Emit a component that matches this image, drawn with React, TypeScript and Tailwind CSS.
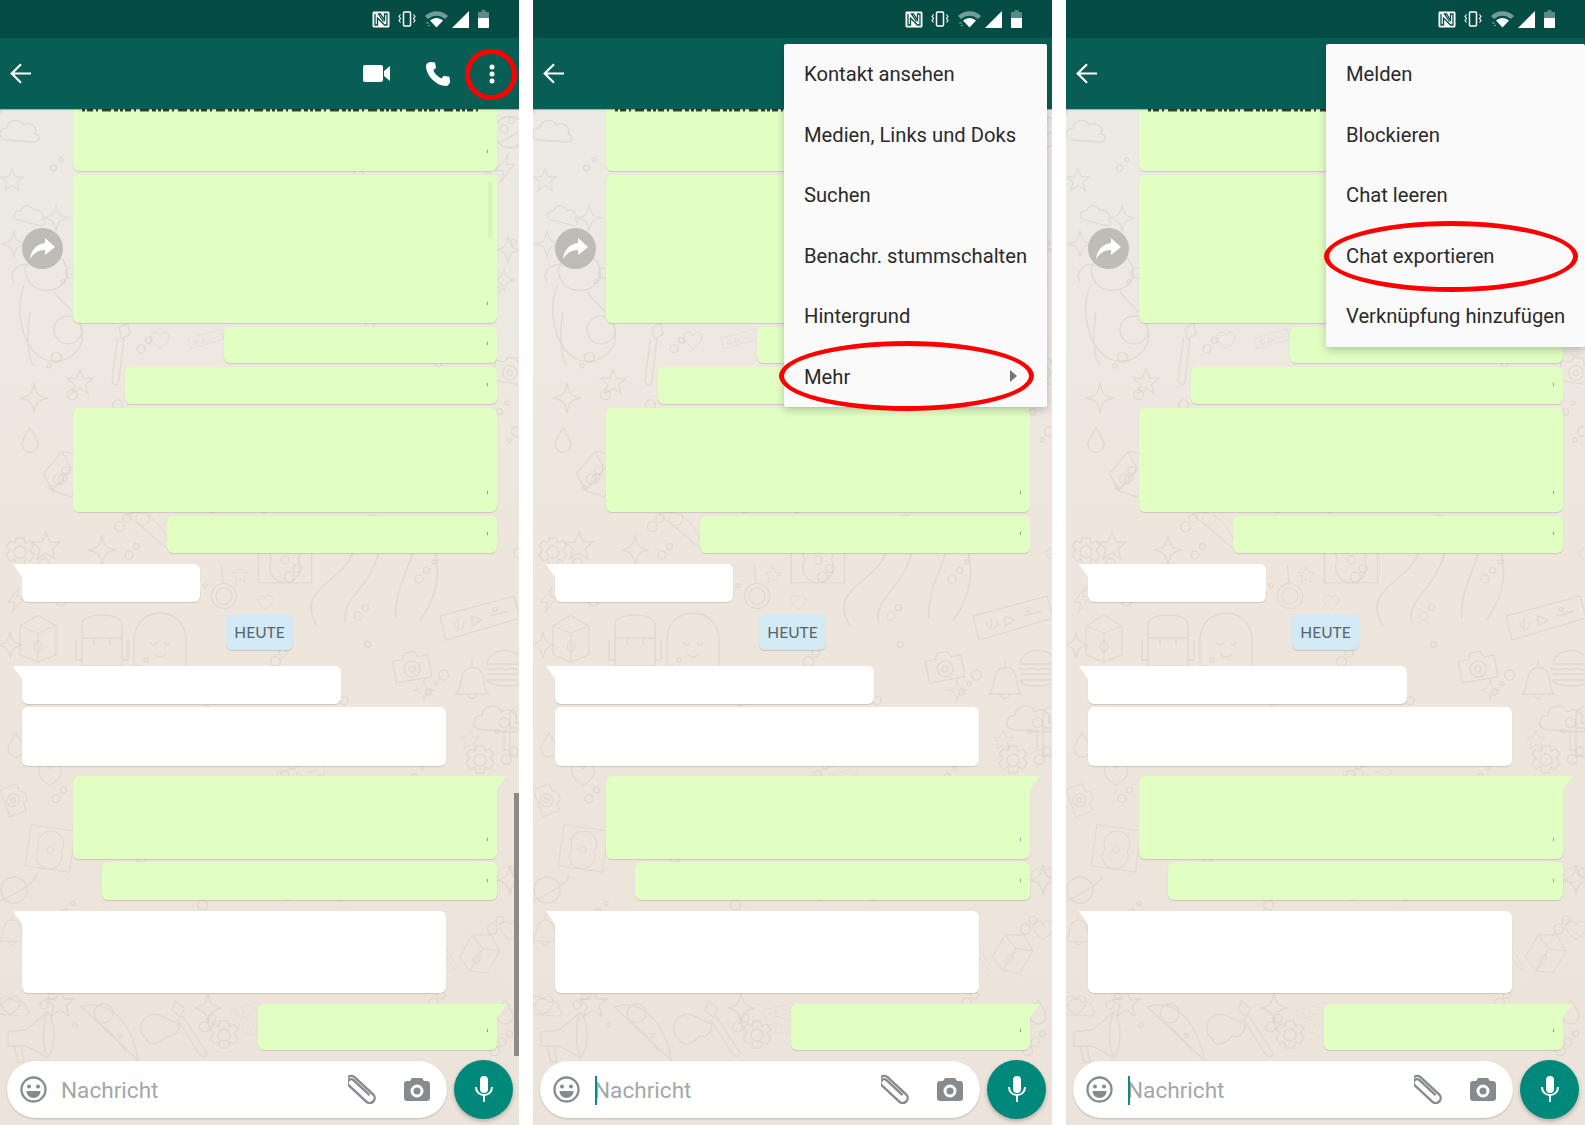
import React from 'react';

const FONT = "font-['Roboto',sans-serif]";

type Bubble = { cls: string; tail?: boolean; tick?: boolean };

const Doodle: React.FC<{ d: string; x: number; y: number; s?: number; r?: number }> = ({ d, x, y, s = 1, r = 0 }) => (
    <path d={d} transform={`translate(${x} ${y}) rotate(${r}) scale(${s})`} />
);

// doodle outlines, roughly 40x40 round the origin
const STAR = 'M0-14 4-4 14-4 6 3 9 13 0 7-9 13-6 3-14-4-4-4Z';
const SPARK = 'M0-15C2-4 4-2 14 0 4 2 2 4 0 15-2 4-4 2-14 0-4-2-2-4 0-15Z';
const CLOUD = 'M-16 8C-24 8-24-4-15-4-14-13-2-14 1-7 9-11 16-5 13 2 19 3 18 10 12 10L-16 8Z';
const HEART = 'M0 12C-18 0-14-12-6-11-2-11 0-7 0-6 0-7 3-12 7-11 15-10 17 1 0 12Z';
const DROP = 'M0-12C5-4 8 0 8 4 8 9 4 12 0 12-4 12-8 9-8 4-8 0-5-4 0-12Z';
const BOLT = 'M4-16-10 3-1 3-5 16 10-4 1-4Z';
const PIZZA = 'M-34-22C-10-32 18-16 30 30L-34-22ZM-20-10C-6-2 8 10 16 22M-14-26A9 9 0 1 1-6-8 9 9 0 1 1-14-26Z';
const MEGAPHONE = 'M-26-6-8-8 14-26C22-14 22 8 14 20L-8 8-26 8ZM-20 8-16 24-10 24-13 8M14-26C8-14 8 8 14 20';
const BRUSH = 'M-14-30-4-22-8-12-18-20ZM-6-14 20 26C24 32 16 34 12 28L-12-10';
const GEAR = 'M-4-14H4L5-9 10-11 14-6 10-2 14 3 10 9 5 7 4 13H-4L-5 7-10 9-14 3-10-2-14-6-10-11-5-9ZM6 0A6 6 0 1 1-6 0 6 6 0 1 1 6 0Z';
const CAMERA = 'M-18-10H-8L-5-16H5L8-10H18V12H-18ZM8 1A8 8 0 1 1-8 1 8 8 0 1 1 8 1ZM3 1A3 3 0 1 1-3 1 3 3 0 1 1 3 1Z';
const BURGER = 'M-18-4C-16-22 16-22 18-4ZM-20 0C-12 5-6-3 0 2 6-3 12 5 20 0M-18 6H18M-18 12H18C16 20-16 20-18 12Z';
const BELL = 'M-16 14C-10 8-12-2-8-8-4-14 6-14 9-8 13-2 11 8 16 14ZM-4 14C-4 20 4 20 4 14M0-14V-20';
const PACK = 'M-20-16C-20-28 20-28 20-16V26H-20ZM-20-2H20M-8-2V6M8-2V6M-26 0V20H-20M26 0V20H20';
const BOX = 'M-20-10 0-22 20-10V22L0 30-20 22ZM-20-10 0-2 20-10M0-2V30M-4 14C-4 8 0 6 0 6 0 6 4 8 4 14 4 20-4 20-4 14Z';
const FACE = 'M-26 36V0C-26-36 26-36 26 0V36M-10 2C-8 6-4 6-3 2M4 2C6 6 9 6 10 2M-6 14C-2 18 2 18 6 14';
const RECORD = 'M-28-28H28V24H-28ZM14 0A16 16 0 1 1-14 0 16 16 0 1 1 14 0ZM4 0A4 4 0 1 1-4 0 4 4 0 1 1 4 0Z';
const SNAKE = 'M-30 50C-50 20-10 10 0-10 10-30 10-50 20-50 34-50 30-20 20 0 10 20-8 30-4 48';
const TENTACLE = 'M-22 44C-24 10 0-10-4-44M8-44C14-14 26 10 0 46';
const TICKET = 'M-38-4 36-24 42-2-32 20ZM-20 -2V8M-24 2C-24 12-14 12-14 2M-6-4 4 0-6 6ZM12-4 30-9';
const ASTRO = 'M-24-26C-30-42 2-56 14-38 24-20 8-8-6-10-14-10-22-16-24-26ZM-26-14C-36 10-28 50-4 60 16 66 36 50 32 30 28 12 14 6 4-8M-20-34C-30-40-42-28-36-18M-20 12C-24 34-22 60-16 66M4 30A14 14 0 1 1 32 30 14 14 0 1 1 4 30Z';
const MAGNIFIER = 'M14 0A14 14 0 1 1-14 0 14 14 0 1 1 14 0ZM9 0A9 9 0 1 1-9 0 9 9 0 1 1 9 0ZM-10-10-24-24';
const PLANET = 'M13 0A13 13 0 1 1-13 0 13 13 0 1 1 13 0ZM-20 10C-30 18-10 10 0 4 12-2 28-14 20-14';
const BLOB = 'M-12-14C-2-20 8-8 16-8 24-4 14 10 6 6 0 14-12 18-14 8-22 4-20-10-12-14Z';

const DOODLES: [string, number, number, number?, number?][] = [
    [CLOUD, 22, 132], [STAR, 12, 180, 0.8], [SPARK, 56, 218, 0.9], [CLOUD, 32, 216, 0.8, 10], [BOLT, 505, 168, 0.9], [PLANET, 510, 132, 1.2],
    [ASTRO, 50, 300, 1], [SPARK, 14, 244, 0.9], [SPARK, 508, 250, 0.9], [SPARK, 504, 280, 0.8], [HEART, 160, 340, 0.7], [TICKET, 205, 340, 0.45],
    [BRUSH, 120, 352, 0.9, 40], [STAR, 80, 382, 0.9], [DROP, 30, 440, 1], [SPARK, 34, 398, 1], [CAMERA, 510, 372, 0.9, 10], [BOX, 70, 470, 0.9, 40],
    [GEAR, 20, 552], [STAR, 46, 546, 1], [SPARK, 102, 550, 1], [PIZZA, 150, 530, 0.7], [RECORD, 285, 560, 0.95], [SNAKE, 350, 570, 1.1], [TENTACLE, 420, 570, 1.1],
    [BOLT, 16, 600, 0.8], [BOX, 38, 635, 0.9], [PACK, 102, 640, 1], [FACE, 160, 640, 1], [MAGNIFIER, 224, 596, 0.9, 40], [STAR, 240, 575, 0.6], [HEART, 265, 602, 0.6], [TICKET, 478, 620, 1],
    [SPARK, 10, 645, 0.9], [BELL, 472, 680, 1], [BURGER, 505, 668, 1], [CAMERA, 412, 668, 1, -10], [SPARK, 424, 690, 0.7], [STAR, 240, 642, 0.6],
    [DROP, 16, 745, 1], [PACK, 530, 730, 1], [HEART, 50, 775, 0.9], [TICKET, 300, 775, 0.6],
    [GEAR, 480, 760, 1], [STAR, 470, 740, 0.7], [CLOUD, 500, 720, 1.2], [RECORD, 50, 850, 0.8, 8], [CAMERA, 14, 800, 0.8, 70], [SPARK, 510, 880, 1], [HEART, 510, 930, 0.8],
    [PLANET, 14, 890, 1], [FACE, 510, 880, 0.5], [BOX, 482, 950, 0.8, 30], [BELL, 12, 930, 0.8], [BRUSH, 445, 950, 0.6],
    [HEART, 10, 1005, 0.8], [MEGAPHONE, 34, 1038, 1], [STAR, 60, 1003, 1], [PIZZA, 112, 1030, 0.95, 4], [BRUSH, 188, 1028, 0.9], [BLOB, 160, 1030, 1], [GEAR, 224, 1035, 1], [SPARK, 208, 1008, 1], [TICKET, 245, 1012, 0.4],
    [RECORD, 248, 1026, 0.3, 15], [DROP, 505, 1012, 1], [CLOUD, 15, 1008, 0.8],
];

// little filler circles, same spread on every phone
const DOTS = Array.from({ length: 170 }, (_, i) => ({
    x: (i * 137.5 + (i % 7) * 11) % 519,
    y: 112 + ((i * 211.3 + (i % 5) * 17) % 950),
    r: 2 + (i % 4),
}));

const Wallpaper = () => (
    <svg className="absolute left-0 top-0" width="519" height="1125" viewBox="0 0 519 1125" fill="none" stroke="#d6d0c7" strokeOpacity="0.62" strokeWidth="1.3">
        {DOTS.map((c, i) => (
            <circle key={i} cx={c.x} cy={c.y} r={c.r} />
        ))}
        {DOODLES.map(([d, x, y, s, r], i) => (
            <Doodle key={i} d={d} x={x} y={y} s={s} r={r} />
        ))}
    </svg>
);

const BUBBLES: Bubble[] = [
    { cls: 'self-end w-[424px] h-[62px] bg-[#e1fec3] rounded-b-md', tick: true },
    { cls: 'self-end w-[424px] h-[148px] mt-[4px] bg-[#e1fec3] rounded-md', tick: true },
    { cls: 'self-end w-[273px] h-[36px] mt-[4px] bg-[#e1fec3] rounded-md', tick: true },
    { cls: 'self-end w-[372px] h-[37px] mt-[4px] bg-[#e1fec3] rounded-md', tick: true },
    { cls: 'self-end w-[424px] h-[104px] mt-[4px] bg-[#e1fec3] rounded-md', tick: true },
    { cls: 'self-end w-[330px] h-[37px] mt-[4px] bg-[#e1fec3] rounded-md', tick: true },
    { cls: 'self-start w-[178px] h-[38px] mt-[11px] bg-white rounded-md rounded-tl-none', tail: true },
];

const BUBBLES_AFTER: Bubble[] = [
    { cls: 'self-start w-[319px] h-[38px] mt-[16px] bg-white rounded-md rounded-tl-none', tail: true },
    { cls: 'self-start w-[424px] h-[59px] mt-[3px] bg-white rounded-md' },
    { cls: 'self-end w-[424px] h-[83px] mt-[10px] bg-[#e1fec3] rounded-md rounded-tr-none', tail: true, tick: true },
    { cls: 'self-end w-[395px] h-[38px] mt-[3px] bg-[#e1fec3] rounded-md', tick: true },
    { cls: 'self-start w-[424px] h-[82px] mt-[11px] bg-white rounded-md rounded-tl-none', tail: true },
    { cls: 'self-end w-[239px] h-[46px] mt-[11px] bg-[#e1fec3] rounded-md rounded-tr-none', tail: true, tick: true },
];

const ChatBubble: React.FC<{ b: Bubble }> = ({ b }) => {
    const mine = b.cls.includes('self-end');
    return (
        <div className={`relative shrink-0 shadow-[0_1px_1px_rgba(0,0,0,0.14)] ${b.cls}`}>
            {b.tail && mine && (
                <svg className="absolute -right-[10px] top-0" width="10" height="13" viewBox="0 0 10 13">
                    <path d="M0 0H10L0 13Z" fill="#e1fec3" />
                </svg>
            )}
            {b.tail && !mine && (
                <svg className="absolute -left-[9px] top-0" width="9" height="13" viewBox="0 0 9 13">
                    <path d="M0 0H9V13Z" fill="#fff" />
                </svg>
            )}
            {b.tick && <span className="absolute right-[9px] bottom-[18px] w-[1px] h-[3px] bg-[#8d9a85]" />}
        </div>
    );
};

const StatusIcons = () => (
    <div className="flex items-center justify-end h-[38px] pr-[30px] shrink-0 bg-[#054c44]">
        <svg width="18" height="17" viewBox="0 0 18 17" className="mr-[8px]">
            <path d="M2 .5h14c.8 0 1.500.7 1.500 1.500v13c0 .8-.7 1.500-1.500 1.500H2C1.200 16.500.5 15.800.5 15V2C.5 1.200 1.200.5 2 .5Z" fill="#fff" />
            <path d="M3 3v11h2.500V7l7 7H15V3h-2.500v6l-4-6H6.500l5 7.500" fill="none" stroke="#054c44" strokeWidth="1.300" />
        </svg>
        <svg width="18" height="16" viewBox="0 0 18 16" className="mr-[9px]" fill="none" stroke="#fff">
            <rect x="5.500" y="1" width="7" height="14" rx="1" strokeWidth="1.500" />
            <path d="M2.500 3.500 1 5.500l1.500 2-1.500 2 1.500 2M15.500 3.500l1.500 2-1.500 2 1.500 2-1.500 2" strokeWidth="1.100" />
        </svg>
        <svg width="23" height="17" viewBox="0 0 23 17" className="mr-[4px]">
            <path d="M0 5C6-1.500 17-1.500 23 5L20 8C15 3.500 8 3.500 3 8Z" fill="#fff" fillOpacity=".45" />
            <path d="M5 9.500C9 6 14 6 18 9.500L11.500 16.500Z" fill="#fff" />
            <path d="M1 12h3M3 14.500h2" stroke="#fff" strokeOpacity=".5" />
        </svg>
        <svg width="17" height="17" viewBox="0 0 17 17" className="mr-[9px]">
            <path d="M17 0V17H0Z" fill="#fff" />
        </svg>
        <svg width="11" height="18" viewBox="0 0 11 18">
            <path d="M3.500 0h4v2H10c.6 0 1 .4 1 1v14c0 .6-.4 1-1 1H1c-.6 0-1-.4-1-1V3c0-.6.4-1 1-1h2.500Z" fill="#fff" fillOpacity=".35" />
            <path d="M0 8h11v9c0 .6-.4 1-1 1H1c-.6 0-1-.4-1-1Z" fill="#fff" />
        </svg>
    </div>
);

const Header = () => (
    <div className="relative z-10 flex items-center h-[71px] pl-[10px] pr-[24px] shrink-0 bg-[#085e54] shadow-[0_1px_1px_rgba(0,0,0,0.25)]">
        <svg width="21" height="21" viewBox="0 0 21 21" fill="none" stroke="#fff" strokeWidth="2.200">
            <path d="M21 10.500H2M11 1.200 1.700 10.500 11 19.800" />
        </svg>
        <svg width="27" height="17" viewBox="0 0 27 17" className="ml-auto">
            <path d="M2 0h16c1.100 0 2 .9 2 2v13c0 1.100-.9 2-2 2H2c-1.100 0-2-.9-2-2V2C0 .9.900 0 2 0ZM21 6l6-5v15l-6-5Z" fill="#fff" />
        </svg>
        <svg width="24" height="24" viewBox="0 0 24 24" className="ml-[36px]">
            <path d="M4.800 0 9 .6 10 6 7.300 8.200c1.300 3.300 4.500 6.700 8.200 8.300l2.300-2.800 5.600 1.100.6 4.400c.2 2-1.500 4.800-3.600 4.800C10 24 0 13.500 0 3.800 0 1.700 2.800-.2 4.800 0Z" fill="#fff" />
        </svg>
        <svg width="6" height="20" viewBox="0 0 6 20" className="ml-[39px]" fill="#fff">
            <circle cx="3" cy="3" r="2.500" />
            <circle cx="3" cy="10" r="2.500" />
            <circle cx="3" cy="17" r="2.500" />
        </svg>
    </div>
);

const Forward = () => (
    <div className="absolute left-[22px] top-[228px] w-[41px] h-[41px] rounded-full bg-[#bfbcb7] flex items-center justify-center">
        <svg width="25" height="22" viewBox="0 0 25 22">
            <path d="M15 0 25 9 15 17V12C8 12 4 15 0 21 1 13 6 6 15 5Z" fill="#fff" />
        </svg>
    </div>
);

const InputBar: React.FC<{ caret?: boolean }> = ({ caret }) => (
    <div className="absolute left-0 right-0 top-[1059px] flex items-center pl-[7px] pr-[6px] h-[60px]">
        <div className="relative flex items-center w-[440px] h-[57px] rounded-full bg-white shadow-[0_1px_2px_rgba(0,0,0,0.18)] pl-[13px] pr-[17px]">
            <svg width="27" height="27" viewBox="0 0 27 27" fill="none">
                <circle cx="13.500" cy="13.500" r="12" stroke="#858b8f" strokeWidth="2.300" />
                <circle cx="9" cy="10.500" r="2" fill="#858b8f" />
                <circle cx="18" cy="10.500" r="2" fill="#858b8f" />
                <path d="M6.500 15h14c0 4-3 7-7 7s-7-3-7-7Z" fill="#858b8f" />
            </svg>
            <span className={`${FONT} ml-[14px] mt-[4px] text-[22.600px] leading-none text-[#a4a7a9]`}>Nachricht</span>
            {caret && <span className="absolute left-[55px] top-[15px] w-[2px] h-[29px] bg-[#0a8d7e]" />}
            <svg width="30" height="30" viewBox="-15 -15 30 30" fill="none" stroke="#858b8f" strokeWidth="2.400" className="ml-auto -mr-[2px]">
                <path transform="rotate(43)" d="M-14-3H11a5 5 0 0 1 0 10H-13a3.500 3.500 0 0 1 0-7H9M-14-3A5 5 0 0 0-14 7" />
            </svg>
            <svg width="26" height="23" viewBox="0 0 26 23" className="ml-[28px]">
                <path d="M8 0h10l2 3h3c1.700 0 3 1.300 3 3v14c0 1.700-1.300 3-3 3H3c-1.700 0-3-1.300-3-3V6c0-1.700 1.300-3 3-3h3ZM13 6.500a6.500 6.500 0 1 0 0 13 6.500 6.500 0 0 0 0-13Zm0 3a3.500 3.500 0 1 1 0 7 3.500 3.500 0 0 1 0-7Z" fill="#858b8f" fillRule="evenodd" />
            </svg>
        </div>
        <div className="ml-auto flex items-center justify-center w-[59px] h-[59px] rounded-full bg-[#00897a] shadow-[0_2px_4px_rgba(0,0,0,0.25)]">
            <svg width="18" height="26" viewBox="0 0 18 26" fill="#fff">
                <rect x="5" y="0" width="8" height="17" rx="4" />
                <path d="M1 11c0 5 3.500 8 8 8s8-3 8-8" fill="none" stroke="#fff" strokeWidth="2" />
                <rect x="8" y="18" width="2" height="8" />
            </svg>
        </div>
    </div>
);

const Menu: React.FC<{ items: string[]; cls: string; arrow?: boolean }> = ({ items, cls, arrow }) => (
    <div className={`absolute z-20 top-[44px] bg-[#fafafa] rounded-[2px] shadow-[0_3px_8px_rgba(0,0,0,0.22)] ${cls}`}>
        {items.map((item) => (
            <div key={item} className={`${FONT} relative flex items-center h-[60.500px] pl-[20px] text-[20.200px] text-[#2a2a2a] whitespace-nowrap`}>
                {item}
                {arrow && item === 'Mehr' && (
                    <svg width="7" height="12" viewBox="0 0 7 12" className="absolute right-[30px] top-[23px]">
                        <path d="M0 0 7 6 0 12Z" fill="#757575" />
                    </svg>
                )}
            </div>
        ))}
    </div>
);

const Phone: React.FC<{ children?: React.ReactNode; caret?: boolean }> = ({ children, caret }) => (
    <div className="relative flex flex-col w-[519px] h-[1125px] shrink-0 overflow-hidden bg-gradient-to-b from-[#ecebe6] via-[#eee6dd] to-[#ece4db]">
        <Wallpaper />
        <StatusIcons />
        <Header />
        <div className="relative flex flex-col px-[22px]">
            {BUBBLES.map((b, i) => (
                <ChatBubble key={i} b={b} />
            ))}
            <svg className="absolute z-[1] left-[82px] top-0" width="400" height="5" viewBox="0 0 400 5">
                <path d="M0 1H400" stroke="#3b4436" strokeWidth="2.800" strokeDasharray="3 2 6 3 2 4 9 3 4 2" />
            </svg>
            <div className="self-center flex items-center justify-center w-[67px] h-[36px] mt-[12px] pt-[2px] rounded-md bg-[#d3e9f3] shadow-[0_1px_1px_rgba(0,0,0,0.14)] font-['Lato',sans-serif] text-[15.500px] text-[#54656f]">
                HEUTE
            </div>
            {BUBBLES_AFTER.map((b, i) => (
                <ChatBubble key={i} b={b} />
            ))}
        </div>
        <Forward />
        <InputBar caret={caret} />
        {children}
    </div>
);

export default function App() {
    return (
        <div className="flex gap-[14px] w-[1585px] h-[1125px] bg-white overflow-hidden">
            <Phone>
                <span className="absolute right-0 top-[793px] w-[5px] h-[263px] bg-[#8e8b87]" />
                <span className="absolute left-[488px] top-[182px] w-[5px] h-[56px] bg-[#d9f5bb]" />
                <span className="absolute z-20 left-[465px] top-[49px] w-[52px] h-[51px] rounded-full border-[5px] border-[#f00]" />
            </Phone>
            <Phone caret>
                <Menu cls="left-[251px] w-[263px]" arrow items={['Kontakt ansehen', 'Medien, Links und Doks', 'Suchen', 'Benachr. stummschalten', 'Hintergrund', 'Mehr']} />
                <span className="absolute z-30 left-[246px] top-[341px] w-[255px] h-[70px] rounded-[50%] border-[5px] border-[#f00]" />
            </Phone>
            <Phone caret>
                <Menu cls="left-[260px] w-[259px]" items={['Melden', 'Blockieren', 'Chat leeren', 'Chat exportieren', 'Verknüpfung hinzufügen']} />
                <span className="absolute z-30 left-[258px] top-[221px] w-[254px] h-[71px] rounded-[50%] border-[5px] border-[#f00]" />
            </Phone>
        </div>
    );
}
